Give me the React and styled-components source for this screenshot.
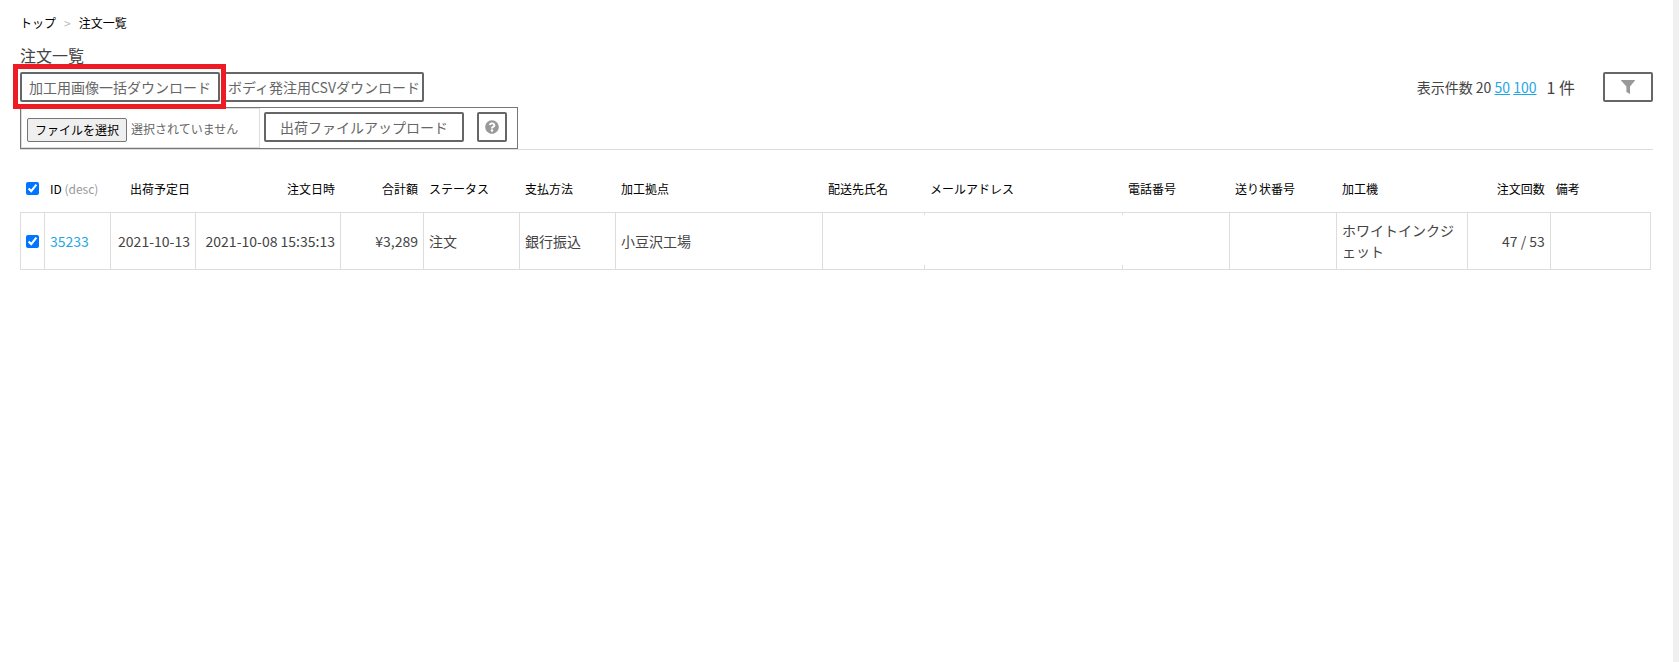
import React, { useState } from 'react';
import styled, { createGlobalStyle, css } from 'styled-components';
import { FaQuestionCircle } from 'react-icons/fa';

const GlobalStyle = createGlobalStyle`
  * {
    box-sizing: border-box;
  }
  body {
    margin: 0;
    color: #444;
    background: #fff;
    font-family: 'Noto Sans CJK JP', sans-serif;
    font-size: 14px;
    line-height: 21px;
  }
  a {
    color: #1ea7e8;
  }
`;

const Page = styled.div`
  min-height: 100vh;
  padding: 14px 20px 0;
  border-right: 6px solid #f0f0f0;
`;

const Breadcrumb = styled.nav`
  display: flex;
  gap: 8px;
  color: #000;
  font-size: 12px;
  line-height: 18px;
  a {
    color: inherit;
    text-decoration: none;
  }
  .separator {
    color: #bbb;
  }
`;

const Title = styled.h1`
  margin: 11px 0 5px;
  font-size: 16px;
  font-weight: 400;
  line-height: 24px;
`;

const Header = styled.header`
  border-bottom: 1px solid #ddd;
`;

const Toolbar = styled.div`
  display: flex;
  align-items: center;
  gap: 4px;
`;

const Button = styled.button`
  display: flex;
  align-items: center;
  justify-content: center;
  width: ${({ $width }) => $width || 200}px;
  height: 30px;
  padding: 0;
  border: 2px solid #666;
  border-radius: 2px;
  background: #fff;
  color: #666;
  font: inherit;
  white-space: nowrap;
  svg {
    color: #999;
  }
`;

const Highlight = styled.div`
  position: relative;
  &::after {
    content: '';
    position: absolute;
    z-index: 1;
    inset: -8px -6px -7px -7px;
    border: 5px solid #ed1c24;
    pointer-events: none;
  }
`;

const Paging = styled.div`
  display: flex;
  align-items: center;
  margin-left: auto;
  .total {
    margin: 0 28px 0 10px;
    font-size: 16px;
  }
`;

const UploadForm = styled.form`
  display: flex;
  width: fit-content;
  height: 42px;
  margin-top: 5px;
  padding-right: 10px;
  border: 1px solid #777;
  ${Button} {
    margin: 4px 0 0 4px;
  }
  ${Button} + ${Button} {
    margin-left: 13px;
  }
`;

const FileField = styled.label`
  display: flex;
  align-items: center;
  gap: 4px;
  width: 239px;
  padding: 4px 5px 0;
  border: 1px solid #ddd;
  color: #666;
  font-size: 12px;
  line-height: 22px;
  .choose {
    padding: 0 7px;
    border: 1px solid #767676;
    border-radius: 2px;
    background: #efefef;
    color: #000;
  }
  .status {
    padding-bottom: 2px;
  }
  input {
    position: absolute;
    width: 1px;
    height: 1px;
    opacity: 0;
  }
`;

const Table = styled.table`
  width: calc(100% - 2px);
  margin-top: 16px;
  border-collapse: separate;
  border-spacing: 0;
  table-layout: fixed;
`;

const HeadCell = styled.th`
  height: 46px;
  padding: 0 5px 2px 6px;
  color: #000;
  font-size: 12px;
  font-weight: 400;
  text-align: ${({ $align }) => $align || 'left'};
  white-space: nowrap;
  .order {
    color: #999;
  }
`;

const openEdge = css`
  border-left: 0;
  padding-left: 6px;
  background:
    linear-gradient(#ddd, #ddd) left top / 1px 2px no-repeat,
    linear-gradient(#ddd, #ddd) left bottom / 1px 4px no-repeat;
`;

const Cell = styled.td`
  height: 58px;
  padding: 0 5px;
  border: solid #ddd;
  border-width: 1px 0 1px 1px;
  text-align: ${({ $align }) => $align || 'left'};
  &:last-child {
    border-right-width: 1px;
  }
  ${({ $open }) => $open && openEdge}
  a {
    text-decoration: none;
  }
`;

const Checkbox = styled.input.attrs({ type: 'checkbox' })`
  display: block;
  width: 13px;
  height: 13px;
  margin: 0;
  accent-color: #0075ff;
`;

const columns = [
  { key: 'id', label: 'ID', order: '(desc)', width: 66 },
  { key: 'shipDate', label: '出荷予定日', width: 85, align: 'right' },
  { key: 'orderedAt', label: '注文日時', width: 145, align: 'right' },
  { key: 'total', label: '合計額', width: 83, align: 'right' },
  { key: 'status', label: 'ステータス', width: 96 },
  { key: 'payment', label: '支払方法', width: 96 },
  { key: 'site', label: '加工拠点', width: 207 },
  { key: 'name', label: '配送先氏名', width: 102 },
  { key: 'email', label: 'メールアドレス', width: 198, open: true },
  { key: 'tel', label: '電話番号', width: 107, open: true },
  { key: 'slip', label: '送り状番号', width: 107 },
  { key: 'machine', label: '加工機', width: 131 },
  { key: 'count', label: '注文回数', width: 83, align: 'right' },
  { key: 'note', label: '備考', width: 101 },
];

const tableWidth = columns.reduce((sum, { width }) => sum + width, 24);

const Col = styled.col`
  width: ${({ $width }) => ($width / tableWidth) * 100}%;
`;

const orders = [
  {
    id: '35233',
    shipDate: '2021-10-13',
    orderedAt: '2021-10-08 15:35:13',
    total: '¥3,289',
    status: '注文',
    payment: '銀行振込',
    site: '小豆沢工場',
    machine: 'ホワイトインクジェット',
    count: '47 / 53',
  },
];

const FilterIcon = () => (
  <svg width="14" height="14" viewBox="0 0 14 14" fill="currentColor" aria-hidden="true">
    <path d="M0 0h14v.6L9 6.4V14l-3.6-2V6.4L0 .6z" />
  </svg>
);

const OrderTable = () => {
  const [selected, setSelected] = useState(orders.map(({ id }) => id));
  const allSelected = selected.length === orders.length;

  const toggleAll = () => setSelected(allSelected ? [] : orders.map(({ id }) => id));
  const toggle = (id) =>
    setSelected(selected.includes(id) ? selected.filter((s) => s !== id) : [...selected, id]);

  return (
    <Table>
      <colgroup>
        <Col $width={24} />
        {columns.map(({ key, width }) => (
          <Col key={key} $width={width} />
        ))}
      </colgroup>
      <thead>
        <tr>
          <HeadCell>
            <Checkbox aria-label="すべて選択" checked={allSelected} onChange={toggleAll} />
          </HeadCell>
          {columns.map(({ key, label, order, align }) => (
            <HeadCell key={key} $align={align}>
              {label}
              {order && <span className="order"> {order}</span>}
            </HeadCell>
          ))}
        </tr>
      </thead>
      <tbody>
        {orders.map((item) => (
          <tr key={item.id}>
            <Cell>
              <Checkbox
                aria-label={item.id}
                checked={selected.includes(item.id)}
                onChange={() => toggle(item.id)}
              />
            </Cell>
            {columns.map(({ key, align, open }) => (
              <Cell key={key} $align={align} $open={open}>
                {key === 'id' ? <a href={`#${item.id}`}>{item.id}</a> : item[key]}
              </Cell>
            ))}
          </tr>
        ))}
      </tbody>
    </Table>
  );
};

const App = () => {
  return (
    <>
      <GlobalStyle />
      <Page>
        <Breadcrumb>
          <a href="#top">トップ</a>
          <span className="separator">&gt;</span>
          <span>注文一覧</span>
        </Breadcrumb>
        <Header>
          <Title>注文一覧</Title>
          <Toolbar>
            <Highlight>
              <Button type="button">加工用画像一括ダウンロード</Button>
            </Highlight>
            <Button type="button">ボディ発注用CSVダウンロード</Button>
            <Paging>
              <span>
                表示件数 20 <a href="#50">50</a> <a href="#100">100</a>
              </span>
              <span className="total">1 件</span>
              <Button type="button" $width={50} aria-label="絞り込み">
                <FilterIcon />
              </Button>
            </Paging>
          </Toolbar>
          <UploadForm>
            <FileField>
              <input type="file" />
              <span className="choose">ファイルを選択</span>
              <span className="status">選択されていません</span>
            </FileField>
            <Button type="button">出荷ファイルアップロード</Button>
            <Button type="button" $width={30} aria-label="ヘルプ">
              <FaQuestionCircle size={14} />
            </Button>
          </UploadForm>
        </Header>
        <OrderTable />
      </Page>
    </>
  );
};

export default App;
